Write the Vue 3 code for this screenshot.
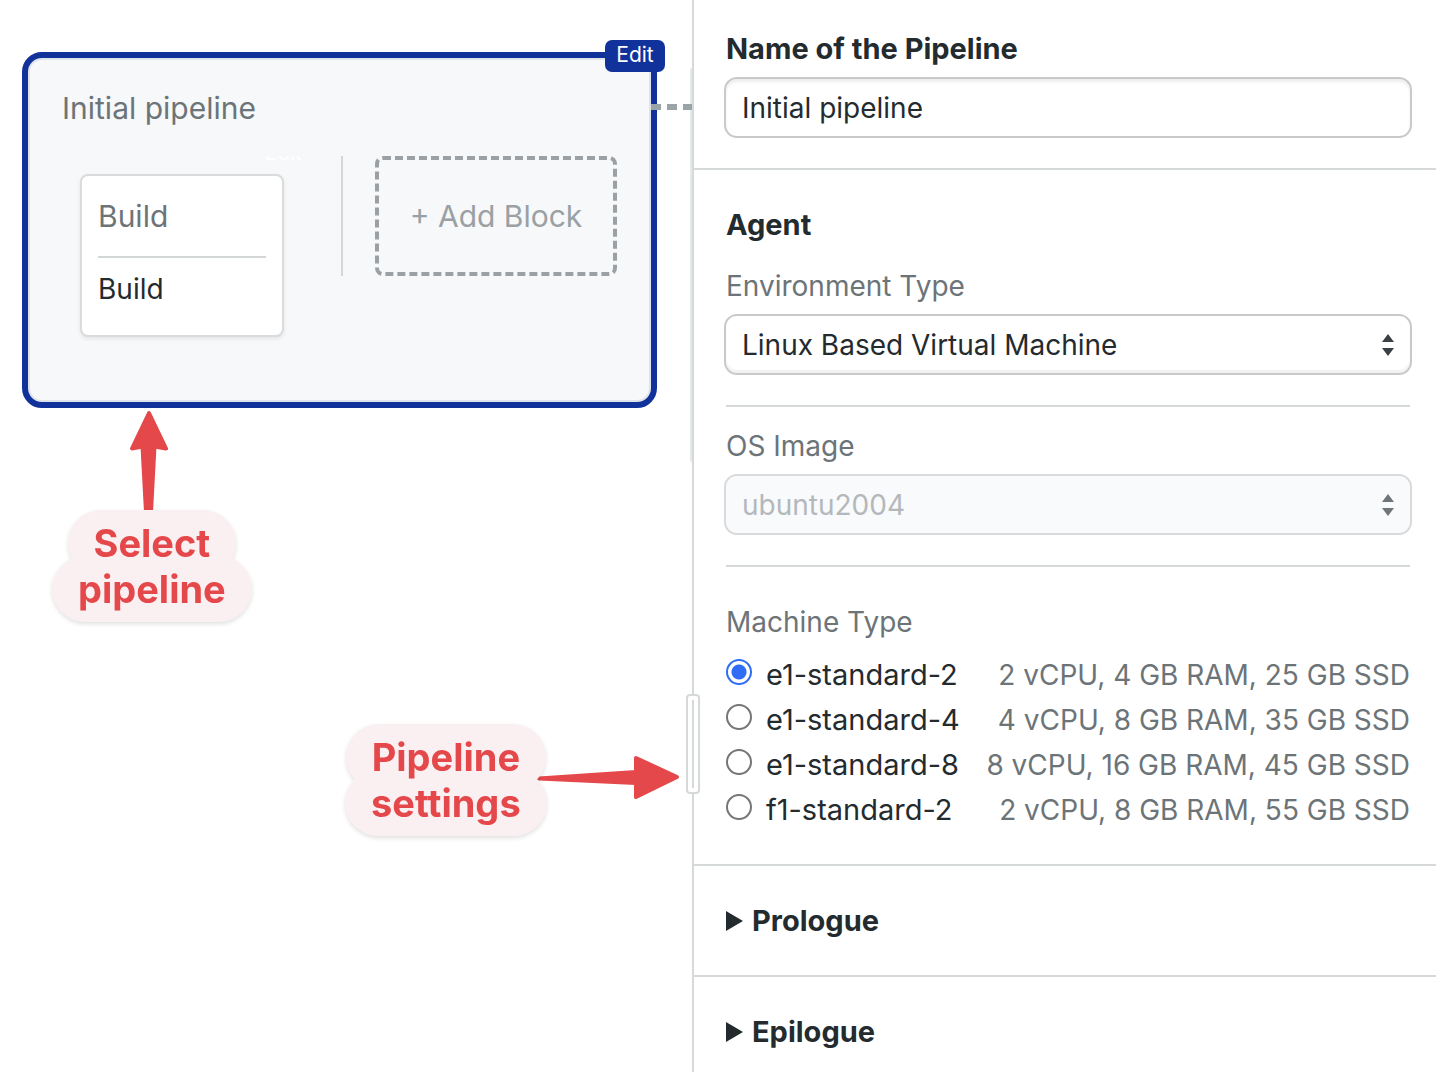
<script setup>
import { ref } from 'vue'

const pipelineName = ref('Initial pipeline')
const environment = ref('Linux Based Virtual Machine')
const osImage = ref('ubuntu2004')
const machine = ref('e1-standard-2')

const machines = [
  { name: 'e1-standard-2', spec: '2 vCPU, 4 GB RAM, 25 GB SSD' },
  { name: 'e1-standard-4', spec: '4 vCPU, 8 GB RAM, 35 GB SSD' },
  { name: 'e1-standard-8', spec: '8 vCPU, 16 GB RAM, 45 GB SSD' },
  { name: 'f1-standard-2', spec: '2 vCPU, 8 GB RAM, 55 GB SSD' },
]
const extras = ['Prologue', 'Epilogue']
</script>

<template>
  <div class="page">
    <main class="canvas">
      <section class="pipeline">
        <button class="edit" type="button">Edit</button>
        <h2 class="pipeline-title">{{ pipelineName }}</h2>
        <div class="blocks">
          <article class="block">
            <span class="block-edit">Edit</span>
            <h3 class="block-title">Build</h3>
            <p class="block-job">Build</p>
          </article>
          <div class="separator"></div>
          <button class="add-block" type="button">+ Add Block</button>
        </div>
      </section>
      <div class="connector"></div>

      <div class="note note-select">
        <svg class="arrow-up" width="44" height="104" viewBox="0 0 44 104" aria-hidden="true">
          <path d="M22 5 L39 40.500 L27.500 38.500 L24 104 H19 L15.500 38.500 L5 40.500 Z" />
        </svg>
        <p class="cloud"><span>Select</span><span>pipeline</span></p>
      </div>
      <div class="note note-settings">
        <p class="cloud"><span>Pipeline</span><span>settings</span></p>
        <svg class="arrow-right" width="146" height="48" viewBox="0 0 146 48" aria-hidden="true">
          <path d="M4 26.500 L101 20 L101 6 L142 25 L101 45 L101 31 Z" />
        </svg>
      </div>
    </main>

    <aside class="panel">
      <div class="resizer"></div>
      <section class="section section-name">
        <label class="heading" for="name">Name of the Pipeline</label>
        <input id="name" v-model="pipelineName" class="field" type="text" />
      </section>

      <section class="section section-agent">
        <h2 class="heading">Agent</h2>
        <label class="label" for="env">Environment Type</label>
        <div class="select-wrap">
          <select id="env" v-model="environment" class="field">
            <option>Linux Based Virtual Machine</option>
          </select>
          <svg class="carets" width="12" height="22" viewBox="0 0 12 22" aria-hidden="true">
            <path d="M0 8 L6 0 L12 8 Z M0 14 H12 L6 22 Z" />
          </svg>
        </div>
        <hr />
        <label class="label label-os" for="os">OS Image</label>
        <div class="select-wrap disabled">
          <select id="os" v-model="osImage" class="field" disabled>
            <option>ubuntu2004</option>
          </select>
          <svg class="carets" width="12" height="22" viewBox="0 0 12 22" aria-hidden="true">
            <path d="M0 8 L6 0 L12 8 Z M0 14 H12 L6 22 Z" />
          </svg>
        </div>
        <hr />
        <fieldset class="machines">
          <legend class="label">Machine Type</legend>
          <label v-for="m in machines" :key="m.name" class="machine">
            <input v-model="machine" type="radio" name="machine" :value="m.name" />
            <span class="machine-name">{{ m.name }}</span>
            <span class="machine-spec">{{ m.spec }}</span>
          </label>
        </fieldset>
      </section>

      <details v-for="e in extras" :key="e" class="section extra">
        <summary class="heading">
          <svg width="17" height="20" viewBox="0 0 17 20" aria-hidden="true">
            <path d="M0 0 L17 10 L0 20 Z" />
          </svg>
          {{ e }}
        </summary>
      </details>
    </aside>
  </div>
</template>

<style>
body {
  margin: 0;
  background: #fff;
}
</style>

<style scoped>
.page {
  display: grid;
  grid-template-columns: minmax(0, 692fr) minmax(0, 744fr);
  min-height: 100vh;
  overflow: hidden;
  font-family: Inter, "Liberation Sans", sans-serif;
  font-size: 28px;
  line-height: 36px;
  color: #242b2e;
}
.page * {
  box-sizing: border-box;
}
h2,
h3,
p {
  margin: 0;
}
button,
input,
select {
  font: inherit;
}

/* Workflow canvas */
.canvas {
  position: relative;
}
.canvas::before {
  content: "";
  position: absolute;
  top: 68px;
  right: 0;
  width: 2px;
  height: 394px;
  border-radius: 2px 0 0 2px;
  background: #e6e9e9;
}
.pipeline {
  position: relative;
  margin: 52px 35px 0 22px;
  padding: 30px 32px 61px;
  border: 6px solid #12329b;
  border-radius: 20px;
  background: #f6f8fa;
  box-shadow: inset 0 0 0 2px #dfe3ea;
}
.edit {
  position: absolute;
  top: -18px;
  right: -14px;
  width: 60px;
  height: 32px;
  padding: 0 0 2px;
  border: 0;
  border-radius: 7px;
  background: #12329b;
  color: #fff;
  font-size: 21px;
  line-height: 30px;
}
.pipeline-title {
  margin: 2px 0 0 2px;
  font-size: 30px;
  font-weight: 400;
  color: #6c7478;
}
.blocks {
  display: flex;
  align-items: flex-start;
  margin-top: 30px;
  padding: 0 2px 4px 20px;
  overflow: hidden;
}
.block {
  position: relative;
  flex: none;
  width: 204px;
  margin-top: 18px;
  padding: 22px 16px 28px;
  border: 2px solid #d9dbdd;
  border-radius: 8px;
  background: #fff;
  box-shadow: 0 2px 4px rgba(0, 0, 0, 0.08);
}
.block-edit {
  position: absolute;
  top: -41px;
  right: -20px;
  color: #fff;
  font-size: 21px;
}
.block-title {
  padding-bottom: 22px;
  border-bottom: 2px solid #d3d7d8;
  font-size: 30px;
  font-weight: 400;
  color: #6c7478;
}
.block-job {
  margin-top: 13px;
}
.separator {
  flex: none;
  width: 2px;
  height: 120px;
  margin: 0 32px 0 57px;
  background: #d3d7d8;
}
.add-block {
  flex: 1;
  height: 120px;
  padding: 0;
  border: 4px dashed #9aa0a4;
  border-radius: 8px;
  background: transparent;
  color: #9aa0a4;
  font-size: 30px;
  white-space: nowrap;
}
.connector {
  position: absolute;
  top: 104px;
  right: 0;
  width: 41px;
  height: 6px;
  background: repeating-linear-gradient(90deg, #9aa5a8 0 10px, transparent 10px 16px);
}

/* Callouts over the canvas */
.note {
  position: absolute;
}
.note svg {
  display: block;
  fill: #e5484b;
  stroke: #e5484b;
  stroke-width: 4px;
  stroke-linejoin: round;
}
.note-select {
  top: 408px;
  left: 52px;
}
.note-settings {
  top: 724px;
  left: 345px;
  display: flex;
}
.arrow-up {
  margin: 0 0 -2px 75px;
}
.arrow-right {
  margin: 28px 0 0 -12px;
}
.cloud {
  display: flex;
  flex-direction: column;
  align-items: center;
  isolation: isolate;
  color: #e5484b;
  font-size: 38px;
  font-weight: 700;
  line-height: 46px;
  filter: drop-shadow(0 2px 2px rgba(0, 0, 0, 0.12));
}
.cloud span {
  position: relative;
  padding: 10px 26px;
}
.cloud span + span {
  margin-top: -20px;
}
.cloud span::before {
  content: "";
  position: absolute;
  inset: 0;
  z-index: -1;
  border-radius: 33px;
  background: #faf0f2;
}

/* Settings panel */
.panel {
  position: relative;
  border-left: 2px solid #d5d9da;
}
.resizer {
  position: absolute;
  top: 694px;
  left: -8px;
  display: flex;
  justify-content: center;
  width: 14px;
  height: 100px;
  padding: 4px 0;
  border: 2px solid #d5d9da;
  border-radius: 4px;
  background: #fff;
  cursor: col-resize;
}
.resizer::before {
  content: "";
  width: 2px;
  background: #d5d9da;
}
.section {
  border-bottom: 2px solid #d5d9da;
  padding: 31px 24px 30px 30px;
}
.heading {
  display: block;
  padding: 0 2px;
  font-size: 29px;
  font-weight: 700;
}
.label {
  display: block;
  padding: 0 2px;
  color: #6c7478;
}
.field {
  display: block;
  width: 100%;
  height: 61px;
  margin: 0;
  padding: 0 48px 0 16px;
  border: 2px solid #c8caca;
  border-radius: 13px;
  appearance: none;
  background: #fff;
  color: #242b2e;
  outline: 0;
}
input.field {
  margin-top: 10px;
  box-shadow: inset 0 3px 3px rgba(0, 0, 0, 0.07);
}
select.field {
  box-shadow: inset 0 -3px 2px rgba(0, 0, 0, 0.06);
}
.section-agent {
  padding-top: 37px;
  padding-bottom: 32px;
}
.section-agent h2 {
  margin-bottom: 25px;
}
.select-wrap {
  position: relative;
  margin-top: 10px;
}
.carets {
  position: absolute;
  top: 20px;
  right: 18px;
  fill: #3b4045;
  pointer-events: none;
}
.disabled .field {
  border-color: #d8dadb;
  background: #f9fafc;
  box-shadow: none;
  color: #b3b8bb;
  opacity: 1;
}
.disabled .carets {
  fill: #707579;
}
hr {
  height: 2px;
  margin: 30px 2px 0;
  border: 0;
  background: #d5d9da;
}
.label-os {
  margin-top: 21px;
}
.machines {
  min-width: 0;
  margin: 37px 0 0;
  padding: 0;
  border: 0;
}
.machines legend {
  margin-bottom: 12px;
}
.machine {
  display: flex;
  align-items: baseline;
  height: 45px;
  padding: 0 2px;
  line-height: 45px;
  white-space: nowrap;
}
.machine input {
  flex: none;
  align-self: flex-start;
  width: 26px;
  height: 26px;
  margin: 7px 14px 0 0;
  border: 2px solid #767676;
  border-radius: 50%;
  appearance: none;
  background: #fff;
}
.machine input:checked {
  border-color: #2f6df6;
  background: radial-gradient(circle, #2f6df6 0 7px, #fff 8px);
}
.machine-name {
  font-size: 29px;
}
.machine-spec {
  margin-left: auto;
  color: #6c7478;
}
.extra {
  padding-top: 37px;
  padding-bottom: 36px;
}
.extra:last-child {
  border-bottom: 0;
  padding-bottom: 20px;
}
.extra summary {
  display: flex;
  align-items: center;
  gap: 9px;
  list-style: none;
  cursor: pointer;
}
.extra svg {
  fill: #242b2e;
}
</style>
